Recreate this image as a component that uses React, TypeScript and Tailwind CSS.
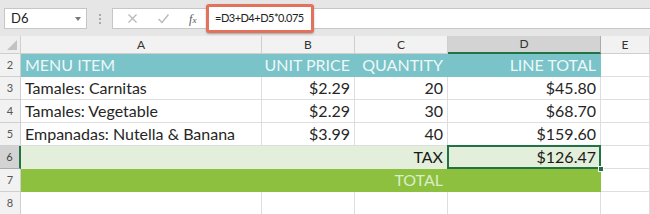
import React from 'react';

const cols = ['A', 'B', 'C', 'D', 'E'];

type Row = {
  n: number;
  cells: (string | null)[];
  kind?: 'head' | 'tax' | 'total';
};

const rows: Row[] = [
  { n: 2, cells: ['MENU ITEM', 'UNIT PRICE', 'QUANTITY', 'LINE TOTAL', null], kind: 'head' },
  { n: 3, cells: ['Tamales: Carnitas', '$2.29', '20', '$45.80', null] },
  { n: 4, cells: ['Tamales: Vegetable', '$2.29', '30', '$68.70', null] },
  { n: 5, cells: ['Empanadas: Nutella & Banana', '$3.99', '40', '$159.60', null] },
  { n: 6, cells: ['', '', 'TAX', '$126.47', null], kind: 'tax' },
  { n: 7, cells: ['', '', 'TOTAL', '', null], kind: 'total' },
  { n: 8, cells: [null, null, null, null, null] },
];

function cellClass(row: Row, ci: number) {
  const base = 'h-[23px] flex items-end pb-[1px] px-[4px] text-[16px] leading-[20px] border-r border-b border-[#dedede] whitespace-nowrap overflow-visible';
  const align = ci === 0 ? ' justify-start' : ' justify-end';
  if (ci === 4) return base;
  if (row.kind === 'head') return base + align + ' bg-[#79c3c9] text-[#eef8f8] border-r-[#79c3c9] border-b-[#79c3c9]';
  if (row.kind === 'tax') return base + align + ' bg-[#e3efda] text-[#1a1a1a] border-r-[#e3efda] border-b-[#e3efda]';
  if (row.kind === 'total') return base + align + ' bg-[#8dc03f] text-[#dcedc8] border-r-[#8dc03f] border-b-[#8dc03f]';
  return base + align + ' text-[#262626]';
}

export default function App() {
  return (
    <div className="w-[650px] h-[214px] overflow-hidden bg-white" style={{ fontFamily: 'Lato, "Open Sans", sans-serif' }}>
      {/* formula bar */}
      <div className="h-[36px] bg-[#e6e6e6] flex items-start pt-[8px] pl-[4px] relative">
        <div className="w-[83px] h-[21px] bg-white border border-[#c6c6c6] flex items-center justify-between pl-[6px] pr-[5px] text-[13px] text-[#222]">
          <span>D6</span>
          <span className="w-0 h-0 border-l-[3px] border-r-[3px] border-t-[4px] border-l-transparent border-r-transparent border-t-[#777]"></span>
        </div>
        <div className="w-[25px] h-[21px] flex flex-col items-center justify-center gap-[2px]">
          <span className="w-[2px] h-[2px] bg-[#aaa]"></span>
          <span className="w-[2px] h-[2px] bg-[#aaa]"></span>
          <span className="w-[2px] h-[2px] bg-[#aaa]"></span>
        </div>
        <div className="flex-1 h-[21px] bg-white border-y border-l border-[#c6c6c6] flex items-center">
          <div className="w-[93px] flex items-center justify-around pl-[4px] text-[#b4b4b4]">
            <svg width="11" height="11" viewBox="0 0 11 11"><path d="M1.5 1.5 L9.5 9.5 M9.5 1.5 L1.5 9.5" stroke="#b8b8b8" strokeWidth="1.3" fill="none" /></svg>
            <svg width="13" height="11" viewBox="0 0 13 11"><path d="M1.5 6 L5 9.5 L11.5 1.5" stroke="#b8b8b8" strokeWidth="1.3" fill="none" /></svg>
            <span className="text-[12px] italic text-[#555]" style={{ fontFamily: '"Liberation Serif", serif' }}>f<span className="text-[9px]">x</span></span>
          </div>
        </div>
        <div className="absolute left-[206px] top-[4px] h-[29px] border-[3px] border-[#e2725b] rounded-[3px] bg-white flex items-center pl-[6px] pr-[7px] text-[11px] tracking-[-0.5px] text-[#222] whitespace-nowrap shadow-[0_1px_2px_rgba(0,0,0,0.3)]">
          =D3+D4+D5*0.075
        </div>
      </div>

      {/* grid */}
      <div className="grid grid-cols-[21px_241px_93px_93px_153px_49px]">
        {/* header row */}
        <div className="h-[18px] bg-[#eeeeee] border-r border-b border-[#cfcfcf] flex items-end justify-end pr-[3px] pb-[3px]">
          <svg width="10" height="10" viewBox="0 0 10 10"><path d="M10 0 L10 10 L0 10 Z" fill="#c2c2c2" /></svg>
        </div>
        {cols.map(c => (
          <div
            key={c}
            className={
              c === 'D'
                ? 'h-[18px] bg-[#d3d3d3] border-r border-[#ababab] border-b-2 border-b-[#217346] flex items-center justify-center text-[12px] text-[#333]'
                : 'h-[18px] bg-[#f2f2f2] border-r border-b border-[#cfcfcf] flex items-center justify-center text-[12px] text-[#333]'
            }
          >
            {c}
          </div>
        ))}

        {rows.map(row => (
          <React.Fragment key={row.n}>
            <div
              className={
                row.n === 6
                  ? 'h-[23px] bg-[#d3d3d3] border-r-2 border-r-[#217346] border-b border-[#ababab] flex items-center justify-center text-[11px] text-[#444]'
                  : 'h-[23px] bg-[#f2f2f2] border-r border-b border-[#cfcfcf] flex items-center justify-center text-[11px] text-[#555]'
              }
            >
              {row.n}
            </div>
            {row.cells.map((v, ci) => (
              <div key={ci} className={cellClass(row, ci) + (row.n === 6 && ci === 3 ? ' relative' : '')}>
                {v}
                {row.n === 6 && ci === 3 && (
                  <>
                    <span className="absolute left-[-1px] top-[-1px] right-[-1px] bottom-[-1px] border-2 border-[#217346] pointer-events-none"></span>
                    <span className="absolute right-[-4px] bottom-[-4px] w-[6px] h-[6px] bg-[#217346] border border-white"></span>
                  </>
                )}
              </div>
            ))}
          </React.Fragment>
        ))}
      </div>
    </div>
  );
}
